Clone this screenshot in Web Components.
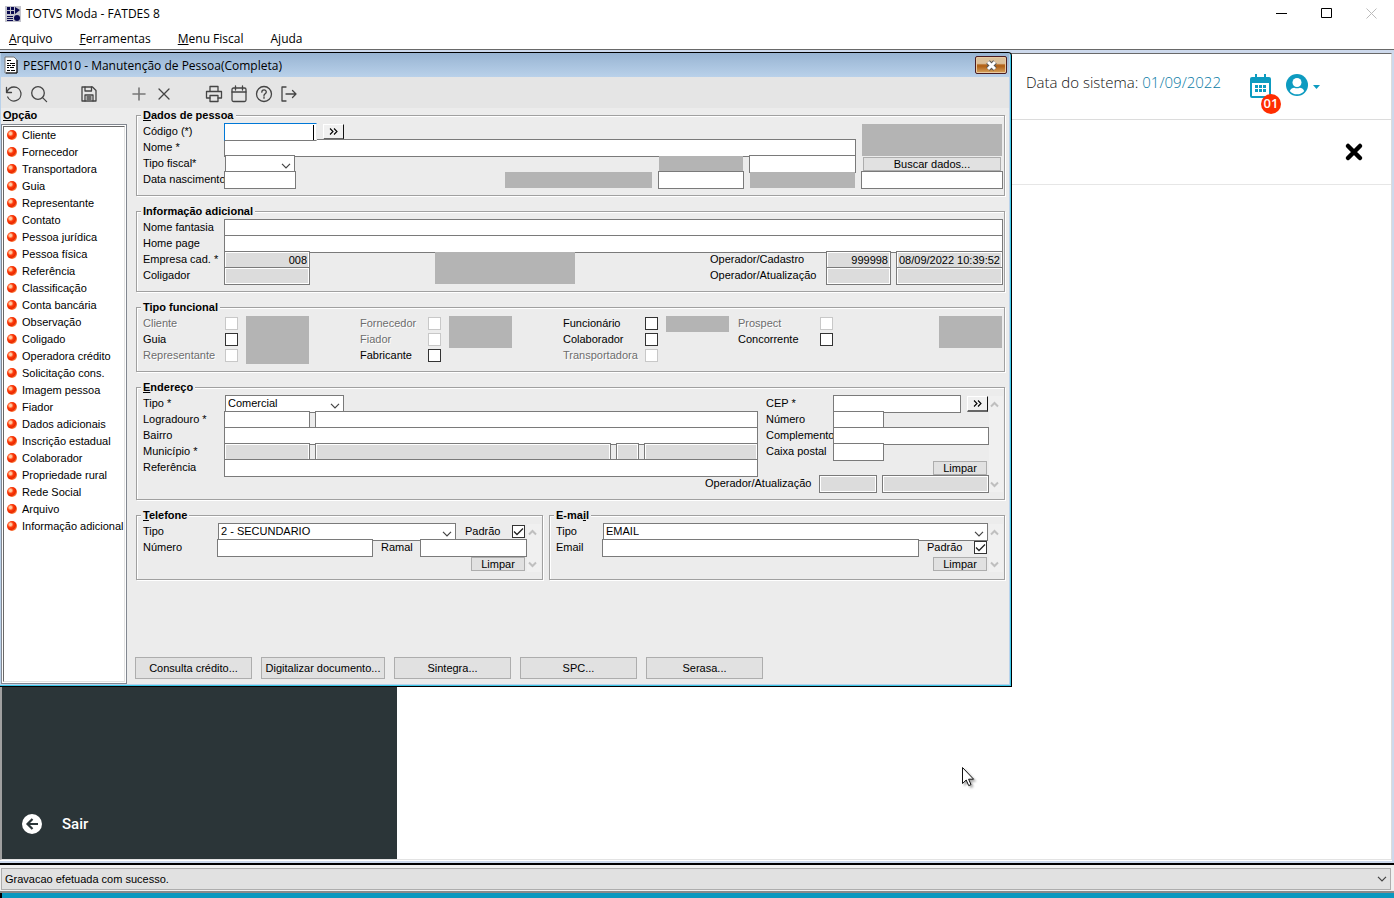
<!DOCTYPE html>
<html lang="pt-BR">
<head>
<meta charset="utf-8">
<title>TOTVS Moda - FATDES 8</title>
<style>
  html, body {
    height: 100%;
    margin: 0;
  }

  body {
    font: 11px/14px "Liberation Sans", Arial, sans-serif;
    color: #000;
    background: #fff;
    overflow: hidden;
  }
</style>
</head>
<body>
<totvs-app></totvs-app>

<script>
const define = (name, html, setup) => {
  customElements.define(name, class extends HTMLElement {
    constructor() {
      super();
      this.attachShadow({ mode: "open" });
    }

    connectedCallback() {
      if (this.shadowRoot.childNodes.length) return;
      this.shadowRoot.innerHTML = typeof html === "function" ? html(this) : html;
      if (setup) setup(this);
    }
  });
};

const chevron = `<svg class="chevron" width="10" height="6" viewBox="0 0 10 6" fill="none" stroke="#444" stroke-width="1.2"><path d="M1 .8 5 4.8 9 .8"/></svg>`;

/* FORM CONTROLS */

define("form-field", (el) => {
  const label = el.getAttribute("label");
  const name = el.getAttribute("name") || "";
  const value = el.getAttribute("value") || "";
  const type = el.getAttribute("type") || "text";
  const width = el.getAttribute("width");
  const disabled = el.hasAttribute("disabled") ? "disabled" : "";
  const size = width ? `width: ${width}px; flex: none;` : "flex: 1;";
  const aria = label ? "" : `aria-label="${name}"`;
  let control = `<input id="control" type="text" value="${value}" ${aria} ${disabled}>`;
  if (type === "select") {
    control = `<select id="control" ${aria}><option>${value}</option></select>${chevron}`;
  }
  if (type === "check") {
    control = `<input id="control" type="checkbox" ${el.hasAttribute("checked") ? "checked" : ""} ${disabled}>
      <svg class="tick" width="13" height="13" viewBox="0 0 13 13" fill="none" stroke="#222" stroke-width="1.3"><path d="M2 6.500 5 9.500 11 3.500"/></svg>`;
  }
  return `
    <style>
      :host {
        display: flex;
        align-items: center;
        height: 16px;
        min-width: 0;
      }

      label {
        flex: none;
        width: var(--label, auto);
        height: 16px;
        line-height: 14px;
        white-space: nowrap;
      }

      .box {
        display: grid;
        align-items: center;
        box-sizing: border-box;
        min-width: 0;
        ${size}
      }

      .box > * { grid-area: 1 / 1; }

      input, select {
        box-sizing: border-box;
        width: 100%;
        min-width: 0;
        height: 18px;
        margin: 0;
        padding: 0 2px;
        border: 1px solid #7a7a7a;
        border-radius: 0;
        outline: none;
        background: #fff;
        color: #000;
        font: inherit;
        appearance: none;
      }

      input:disabled {
        background: #dcdcdc;
        box-shadow: inset 0 0 0 1px #fff;
      }

      .select { padding-left: 1px; }
      select { padding-bottom: 2px; }
      .chevron { justify-self: end; margin: 4px 4px 0 0; pointer-events: none; }

      .check { flex: none; width: 13px; margin-bottom: 2px; }
      .check input { width: 13px; height: 13px; padding: 0; border-color: #333; }
      .check input:disabled { border-color: #c8c8c8; background: #fff; }
      .tick { display: none; pointer-events: none; }
      input:checked + .tick { display: block; }

      :host([type=check][disabled]) label { color: #6d6d6d; text-shadow: 1px 1px 0 #fff; }
      :host([numeric]) input { text-align: right; }

      :host([focused]) .box { position: relative; }
      :host([focused]) input { border-color: #0078d7 #ececec #7a7a7a #0078d7; }
      :host([focused]) .box::after {
        content: "";
        position: absolute;
        top: 2px;
        right: 3px;
        width: 1px;
        height: 15px;
        background: #000;
      }

      slot { display: contents; }
      ::slotted(*) { margin-left: 5px !important; }
      ::slotted(lookup-button) { margin-left: 6px !important; }
      ::slotted(form-field:not([width])) { flex: 1; }
    </style>
    ${label ? `<label for="control">${label}</label>` : ""}
    <div class="box ${type}">${control}</div>
    <slot></slot>`;
});

define("push-button", `
  <style>
    :host { display: block; }

    button {
      display: block;
      box-sizing: border-box;
      width: 100%;
      height: 100%;
      padding: 0 2px;
      border: 1px solid #adadad;
      background: #e1e1e1;
      color: #000;
      font: inherit;
      line-height: 12px;
      white-space: nowrap;
    }
  </style>
  <button type="button"><slot></slot></button>`);

define("lookup-button", `
  <style>
    :host { display: block; flex: none; }

    button {
      display: grid;
      place-items: center;
      box-sizing: border-box;
      width: 21px;
      height: 16px;
      padding: 0;
      border: solid;
      border-width: 1px 1px 2px 1px;
      border-color: #fff #111 #666 #fff;
      background: #f0f0f0;
    }
  </style>
  <button type="button" aria-label="Pesquisar">
    <svg width="9" height="7" viewBox="0 0 9 7" fill="none" stroke="#000" stroke-width="1.1"><path d="M1 .5 4 3.5 1 6.5M5 .5 8 3.5 5 6.5"/></svg>
  </button>`);

define("mask-block", `
  <style>
    :host {
      display: block;
      background: #b4b4b4;
    }
  </style>`);

define("record-scroll", `
  <style>
    :host {
      display: flex;
      flex-direction: column;
      justify-content: space-between;
      align-items: center;
      box-sizing: border-box;
      padding: 5px 3px 4px 0;
      background: #f0f0f0;
    }

    button { display: block; padding: 0; border: 0; background: none; }
    svg { display: block; }
  </style>
  <button type="button" aria-label="Anterior"><svg width="9" height="7" viewBox="0 0 9 7" fill="none" stroke="#bfbfbf" stroke-width="2"><path d="M1 5.5 4.5 2 8 5.5"/></svg></button>
  <button type="button" aria-label="Próximo"><svg width="9" height="7" viewBox="0 0 9 7" fill="none" stroke="#bfbfbf" stroke-width="2"><path d="M1 1.5 4.5 5 8 1.5"/></svg></button>`);

define("group-box", `
  <style>
    :host {
      display: block;
      min-width: 0;
      --label: 81px;
    }

    fieldset {
      position: relative;
      min-width: 0;
      margin: 0;
      padding: 8px 1px 7px 6px;
      border: 1px solid #a0a0a0;
      box-shadow: 1px 1px 0 #fff, inset 1px 1px 0 #fff;
    }

    /* sits over the top border */
    legend {
      position: absolute;
      top: -8px;
      left: 4px;
      padding: 0 2px;
      background: #ececec;
      font-weight: bold;
      white-space: nowrap;
    }

    .grid {
      display: grid;
      grid-template-columns: var(--columns);
      grid-auto-rows: 16px;
      column-gap: var(--gap, 5px);
    }
  </style>
  <fieldset>
    <legend><slot name="legend"></slot></legend>
    <div class="grid"><slot></slot></div>
  </fieldset>`);

/* FORM */

define("person-form", `
  <style>
    :host {
      display: flex;
      flex-direction: column;
      gap: 15px;
      min-width: 0;
      padding: 7px 4px 5px 0;
    }

    .dados { --columns: 76px 1fr 148px 86px 107px 142px; }
    .info { --columns: 287px 140px 1fr 181px 107px; }
    .tipo { --columns: 95px 63px 35px 81px 63px 35px 95px 64px 95px 1fr 64px; --gap: 8px; --label: 82px; }
    .narrow { --label: 68px; }
    .inset { margin: 0 1px; }
    .short { margin-right: 1px; }
    .endereco { --columns: 1fr 8px 223px 14px; --gap: 0px; }
    .cep { --label: 67px; }
    .operador { --label: 114px; justify-self: end; }
    .cadastro { --label: 116px; }
    .nolabel { --label: auto; }

    .pair {
      display: grid;
      grid-template-columns: 407px 1fr;
      gap: 6px;
    }

    .telefone { --columns: 1fr 14px; --gap: 0px; --label: 74px; }
    .email { --columns: 1fr 14px; --gap: 0px; --label: 46px; }

    .line {
      display: flex;
      gap: 8px;
      min-width: 0;
    }

    .line > :first-child { flex: 1; }
    .padrao { --label: 47px; padding-right: 2px; }
    .ramal { --label: 39px; }
    .limpar { width: 54px; height: 14px; margin: 1px 2px 0 0; justify-self: end; }
    .buscar { margin: 1px 2px; height: 14px; }

    .actions {
      display: flex;
      gap: 9px;
      margin: 62px 0 0 -1px;
    }

    .actions push-button { width: 117px; height: 22px; }
    .actions .long { width: 124px; }
  </style>

  <group-box class="dados">
    <span slot="legend"><u>D</u>ados de pessoa</span>
    <form-field label="Código (*)" width="93" focused style="grid-area: 1 / 1 / 2 / 5"><lookup-button></lookup-button></form-field>
    <mask-block class="inset" style="grid-area: 1 / 6 / 3 / 7"></mask-block>
    <form-field label="Nome *" style="grid-area: 2 / 1 / 3 / 6"></form-field>
    <form-field label="Tipo fiscal*" type="select" width="71" style="grid-area: 3 / 1 / 4 / 3"></form-field>
    <mask-block class="inset" style="grid-area: 3 / 4"></mask-block>
    <form-field class="nolabel" name="Documento" style="grid-area: 3 / 5"></form-field>
    <push-button class="buscar" style="grid-area: 3 / 6">Buscar dados...</push-button>
    <form-field label="Data nascimento" width="72" style="grid-area: 4 / 1 / 5 / 3"></form-field>
    <mask-block class="short" style="grid-area: 4 / 3"></mask-block>
    <form-field class="nolabel" name="Registro" style="grid-area: 4 / 4"></form-field>
    <mask-block class="inset" style="grid-area: 4 / 5"></mask-block>
    <form-field class="nolabel" name="Complemento do registro" style="grid-area: 4 / 6"></form-field>
  </group-box>

  <group-box class="info">
    <span slot="legend">Informação adicional</span>
    <form-field label="Nome fantasia" style="grid-area: 1 / 1 / 2 / -1"></form-field>
    <form-field label="Home page" style="grid-area: 2 / 1 / 3 / -1"></form-field>
    <form-field label="Empresa cad. *" value="008" width="86" numeric disabled style="grid-area: 3 / 1"></form-field>
    <mask-block style="grid-area: 3 / 2 / 5 / 3"></mask-block>
    <form-field class="cadastro" label="Operador/Cadastro" value="999998" width="65" numeric disabled style="grid-area: 3 / 4"></form-field>
    <form-field class="nolabel" name="Data do cadastro" value="08/09/2022 10:39:52" disabled style="grid-area: 3 / 5"></form-field>
    <form-field label="Coligador" width="86" disabled style="grid-area: 4 / 1"></form-field>
    <form-field class="cadastro" label="Operador/Atualização" width="65" disabled style="grid-area: 4 / 4"></form-field>
    <form-field class="nolabel" name="Data da atualização" disabled style="grid-area: 4 / 5"></form-field>
  </group-box>

  <group-box class="tipo">
    <span slot="legend">Tipo funcional</span>
    <form-field label="Cliente" type="check" disabled style="grid-area: 1 / 1"></form-field>
    <form-field label="Guia" type="check" style="grid-area: 2 / 1"></form-field>
    <form-field label="Representante" type="check" disabled style="grid-area: 3 / 1"></form-field>
    <mask-block style="grid-area: 1 / 2 / 4 / 3"></mask-block>
    <form-field class="narrow" label="Fornecedor" type="check" disabled style="grid-area: 1 / 4"></form-field>
    <form-field class="narrow" label="Fiador" type="check" disabled style="grid-area: 2 / 4"></form-field>
    <form-field class="narrow" label="Fabricante" type="check" style="grid-area: 3 / 4"></form-field>
    <mask-block style="grid-area: 1 / 5 / 3 / 6"></mask-block>
    <form-field label="Funcionário" type="check" style="grid-area: 1 / 7"></form-field>
    <form-field label="Colaborador" type="check" style="grid-area: 2 / 7"></form-field>
    <form-field label="Transportadora" type="check" disabled style="grid-area: 3 / 7"></form-field>
    <mask-block class="short" style="grid-area: 1 / 8"></mask-block>
    <form-field label="Prospect" type="check" disabled style="grid-area: 1 / 9"></form-field>
    <form-field label="Concorrente" type="check" style="grid-area: 2 / 9"></form-field>
    <mask-block class="short" style="grid-area: 1 / 11 / 3 / 12"></mask-block>
  </group-box>

  <group-box class="endereco">
    <span slot="legend"><u>E</u>ndereço</span>
    <form-field label="Tipo *" type="select" value="Comercial" width="120" style="grid-area: 1 / 1"></form-field>
    <form-field label="Logradouro *" width="86" style="grid-area: 2 / 1"><form-field class="nolabel" name="Nome do logradouro"></form-field></form-field>
    <form-field label="Bairro" style="grid-area: 3 / 1"></form-field>
    <form-field label="Município *" width="86" disabled style="grid-area: 4 / 1">
      <form-field class="nolabel" name="Nome do município" disabled></form-field>
      <form-field class="nolabel" name="UF" width="23" disabled></form-field>
      <form-field class="nolabel" name="País" width="114" disabled></form-field>
    </form-field>
    <form-field label="Referência" style="grid-area: 5 / 1"></form-field>
    <form-field class="cep" label="CEP *" width="128" style="grid-area: 1 / 3"><lookup-button></lookup-button></form-field>
    <form-field class="cep" label="Número" width="51" style="grid-area: 2 / 3"></form-field>
    <form-field class="cep" label="Complemento" style="grid-area: 3 / 3"></form-field>
    <form-field class="cep" label="Caixa postal" width="51" style="grid-area: 4 / 3"></form-field>
    <push-button class="limpar" style="grid-area: 5 / 3">Limpar</push-button>
    <form-field class="operador" label="Operador/Atualização" width="58" disabled style="grid-area: 6 / 1 / 7 / 4"><form-field class="nolabel" name="Data da atualização" width="107" disabled></form-field></form-field>
    <record-scroll style="grid-area: 1 / 4 / 7 / 5"></record-scroll>
  </group-box>

  <div class="pair">
    <group-box class="telefone">
      <span slot="legend"><u>T</u>elefone</span>
      <div class="line" style="grid-area: 1 / 1">
        <form-field class="short" label="Tipo" type="select" value="2 - SECUNDARIO"></form-field>
        <form-field class="padrao" label="Padrão" type="check" checked></form-field>
      </div>
      <div class="line" style="grid-area: 2 / 1">
        <form-field label="Número"></form-field>
        <form-field class="ramal" label="Ramal" width="107"></form-field>
      </div>
      <push-button class="limpar" style="grid-area: 3 / 1">Limpar</push-button>
      <record-scroll style="grid-area: 1 / 2 / 4 / 3"></record-scroll>
    </group-box>
    <group-box class="email">
      <span slot="legend">E-ma<u>i</u>l</span>
      <form-field class="short" label="Tipo" type="select" value="EMAIL" style="grid-area: 1 / 1"></form-field>
      <div class="line" style="grid-area: 2 / 1">
        <form-field label="Email"></form-field>
        <form-field class="padrao" label="Padrão" type="check" checked></form-field>
      </div>
      <push-button class="limpar" style="grid-area: 3 / 1">Limpar</push-button>
      <record-scroll style="grid-area: 1 / 2 / 4 / 3"></record-scroll>
    </group-box>
  </div>

  <div class="actions">
    <push-button>Consulta crédito...</push-button>
    <push-button class="long">Digitalizar documento...</push-button>
    <push-button>Sintegra...</push-button>
    <push-button>SPC...</push-button>
    <push-button>Serasa...</push-button>
  </div>`);

/* OPTION LIST */

const options = [
  "Cliente", "Fornecedor", "Transportadora", "Guia", "Representante", "Contato",
  "Pessoa jurídica", "Pessoa física", "Referência", "Classificação", "Conta bancária",
  "Observação", "Coligado", "Operadora crédito", "Solicitação cons.", "Imagem pessoa",
  "Fiador", "Dados adicionais", "Inscrição estadual", "Colaborador", "Propriedade rural",
  "Rede Social", "Arquivo", "Informação adicional",
];

define("option-list", () => `
  <style>
    :host {
      display: flex;
      flex-direction: column;
      min-width: 0;
    }

    h2 { margin: 0; padding: 0 2px 2px; font: bold 11px/14px "Liberation Sans", Arial, sans-serif; }

    .frame {
      flex: 1;
      padding: 1px;
      border: 1px solid #828790;
      background: #fff;
    }

    ul {
      box-sizing: border-box;
      height: 100%;
      margin: 0;
      padding: 0;
      border: 1px solid;
      border-color: #696969 #e3e3e3 #e3e3e3 #696969;
      list-style: none;
    }

    a {
      display: flex;
      align-items: center;
      gap: 5px;
      height: 15px;
      padding: 0 0 2px 3px;
      color: #000;
      text-decoration: none;
      white-space: nowrap;
    }

    i {
      flex: none;
      width: 10px;
      height: 10px;
      border-radius: 50%;
      background: radial-gradient(circle at 35% 35%, #ffc9a0 0 12%, #ff3c0a 32%, #e82800 55%, #ff8a4a 75%);
    }
  </style>
  <h2><u>O</u>pção</h2>
  <div class="frame">
    <ul>${options.map((o) => `<li><a href="#"><i></i>${o}</a></li>`).join("")}</ul>
  </div>`);

/* TOOLBAR */

const tools = [
  ["Desfazer", `<path d="M1.500 2.500v5h5"/><path d="M1.700 7.300C3 4 5.500 2 9 2a7 7 0 1 1-6.300 10"/>`],
  ["Pesquisar", `<circle cx="8" cy="8" r="6.300"/><path d="m12.600 12.600 4 4"/>`],
  null,
  ["Salvar", `<path d="M2 2h10.500L16 5.500V16H2z"/><path d="M5 2v4h6.500V2M5 16v-6h8v6M7 12h4M7 14h4"/>`],
  null,
  ["Novo", `<path d="M9 3v12M3 9h12" stroke="#777" stroke-width="1.600"/>`],
  ["Excluir", `<path d="m4 4 10 10M14 4 4 14"/>`],
  null,
  ["Imprimir", `<path d="M5 6V1.500h8V6M5 13H1.500V6.500h15V13H13"/><path d="M5 10.500h8v6H5z"/>`],
  ["Calendário", `<rect x="2" y="3" width="14" height="13.500" rx="1.500"/><path d="M2 7h14M5.500 1v4M12.500 1v4"/>`],
  ["Ajuda", `<circle cx="9" cy="9" r="7.500"/><path d="M6.800 7.200C6.800 4.200 11.300 4.300 11.300 7c0 1.700-2.300 1.800-2.300 3.500M9 12v1.300"/>`],
  ["Sair", `<path d="M6 2H2v14h4M6 9h10M12.500 5.500 16 9 12.500 12.500"/>`],
];

define("tool-bar", () => `
  <style>
    :host {
      display: flex;
      align-items: center;
      box-sizing: border-box;
      height: 31px;
      padding-top: 2px;
      background: #e5e5e5;
    }

    button, span {
      display: grid;
      place-items: center;
      width: 25px;
      height: 25px;
      padding: 0;
      border: 0;
      background: none;
    }
  </style>
  ${tools.map((t) => t
    ? `<button type="button" aria-label="${t[0]}"><svg width="18" height="18" viewBox="0 0 18 18" fill="none" stroke="#444" stroke-width="1.300" stroke-linecap="round" stroke-linejoin="round">${t[1]}</svg></button>`
    : "<span></span>").join("")}`);

/* FLOATING WINDOW */

define("mdi-window", `
  <style>
    :host {
      display: block;
      box-sizing: border-box;
      border: solid #000;
      border-width: 1px 1px 1px 0;
      border-radius: 0 4px 0 0;
      background: #ececec;
      box-shadow: inset -1px -1px 0 #3cc8e8, inset -2px -2px 0 #b9d1ea, inset 1px 0 0 #b9d1ea;
      padding: 0 2px 2px 1px;
    }

    header {
      display: flex;
      align-items: center;
      height: 24px;
      padding: 0 2px 0 3px;
      background: linear-gradient(#98b4d2, #b9d1ea);
      font: 12px/18px "Open Sans", "Segoe UI", sans-serif;
    }

    h1 { flex: 1; margin: 0 0 0 5px; padding-top: 1px; font: inherit; }

    header button {
      display: grid;
      place-items: center;
      width: 32px;
      height: 18px;
      padding: 0;
      border: 1px solid #4a1c22;
      border-radius: 2px;
      background: linear-gradient(#dcc09a 0 40%, #b3641a 50% 60%, #d7a560);
      box-shadow: inset 0 0 0 1px #e8c9a0;
    }

    .body {
      display: grid;
      grid-template-columns: 126px 1fr;
      column-gap: 9px;
    }
  </style>
  <header>
    <svg width="14" height="18" viewBox="0 0 14 18"><path d="M1 1h9l3 3v13H1z" fill="#fff" stroke="#777"/><path d="M13 4v13H2" fill="none" stroke="#000"/><path d="M3 4.500h4M3 7.500h2M6 7.500h5M3 9.500h4M8 9.500h3M3 11.500h2M6 11.500h4M3 14.500h3M7 14.500h4" stroke="#000" stroke-width="1.200"/></svg>
    <h1>PESFM010 - Manutenção de Pessoa(Completa)</h1>
    <button type="button" aria-label="Fechar"><svg width="13" height="11" viewBox="0 0 13 11"><path d="m3 2 7 7M10 2 3 9" stroke="#555" stroke-width="5"/><path d="m3 2 7 7M10 2 3 9" stroke="#fff" stroke-width="3"/></svg></button>
  </header>
  <tool-bar></tool-bar>
  <div class="body">
    <option-list></option-list>
    <person-form></person-form>
  </div>`);

/* WEB PAGE BEHIND THE WINDOW */

define("home-page", `
  <style>
    :host {
      display: grid;
      grid-template-columns: 395px 1fr;
      box-sizing: border-box;
      background: #fff;
    }

    aside {
      display: flex;
      flex-direction: column;
      justify-content: flex-end;
      padding: 0 20px 24px;
      background: #2b3538;
    }

    aside a {
      display: flex;
      align-items: center;
      gap: 20px;
      color: #fff;
      font: 500 15px/22px Roboto, sans-serif;
      text-decoration: none;
    }

    .top {
      display: flex;
      justify-content: flex-end;
      height: 65px;
      border-bottom: 1px solid #dcdcdc;
      font: 300 15px/20px "Open Sans", sans-serif;
    }

    .top p { margin: 18px 29px 0 0; color: #111; }
    .top b { color: #0a7ba5; font-weight: inherit; }

    button { padding: 0; border: 0; background: none; }
    svg { display: block; }

    .date { position: relative; align-self: flex-start; margin: 20px 15px 0 0; }

    .badge {
      position: absolute;
      left: 11px;
      top: 20px;
      width: 20px;
      height: 20px;
      border-radius: 50%;
      background: #ff2d00;
      color: #fff;
      font: 600 13px/19px "Open Sans", sans-serif;
      text-align: center;
    }

    .user { display: flex; align-items: center; gap: 5px; align-self: flex-start; margin: 20px 71px 0 0; }
    .user .caret { margin-top: 4px; }

    .sub {
      display: flex;
      align-items: center;
      justify-content: flex-end;
      height: 64px;
      padding-right: 27px;
      border-bottom: 1px solid #e6e6e6;
    }
  </style>
  <aside>
    <a href="#"><svg width="20" height="20" viewBox="0 0 20 20"><circle cx="10" cy="10" r="10" fill="#fff"/><path d="M10.500 5 5.500 10l5 5M5.500 10H16" fill="none" stroke="#2b3538" stroke-width="2.200"/></svg>Sair</a>
  </aside>
  <main>
    <div class="top">
      <p>Data do sistema: <b>01/09/2022</b></p>
      <button class="date" type="button">
        <svg width="21" height="24" viewBox="0 0 21 24"><path d="M2 3h17a2 2 0 0 1 2 2v17a2 2 0 0 1-2 2H2a2 2 0 0 1-2-2V5a2 2 0 0 1 2-2zm0 6v13h17V9z" fill="#0d9bc0" fill-rule="evenodd"/><path d="M5 0h2v4H5zM14 0h2v4h-2zM5 11h3v3H5zM9 11h3v3H9zM13 11h3v3h-3zM5 15h3v3H5zM9 15h3v3H9zM13 15h3v3h-3z" fill="#0d9bc0"/></svg>
        <span class="badge">01</span>
      </button>
      <button class="user" type="button" aria-label="Usuário">
        <svg width="22" height="22" viewBox="0 0 22 22"><circle cx="11" cy="11" r="11" fill="#0d9bc0"/><circle cx="11" cy="8.500" r="4.500" fill="#fff"/><path d="M3.800 17c1-2.400 2.700-3.300 4.400-3.300 1.900.8 3.700.8 5.600 0 1.700 0 3.400.9 4.400 3.300a9.400 9.400 0 0 1-14.400 0z" fill="#fff"/></svg>
        <svg class="caret" width="7" height="4" viewBox="0 0 7 4"><path d="M0 0h7L3.500 4z" fill="#0d9bc0"/></svg>
      </button>
    </div>
    <div class="sub">
      <button type="button" aria-label="Fechar"><svg width="20" height="20" viewBox="0 0 20 20"><path d="m4 4 12 12M16 4 4 16" stroke="#000" stroke-width="4.500" stroke-linecap="round"/></svg></button>
    </div>
  </main>`);

/* APPLICATION */

define("totvs-app", `
  <style>
    :host {
      display: flex;
      flex-direction: column;
      height: 100vh;
    }

    .title {
      display: flex;
      align-items: center;
      height: 27px;
      padding-left: 5px;
      font: 12px/16px "Open Sans", "Segoe UI", sans-serif;
    }

    .title h1 { flex: 1; margin: 0 0 0 5px; font: inherit; }

    .title button {
      display: grid;
      place-items: center;
      width: 45px;
      height: 26px;
      padding: 0;
      border: 0;
      background: none;
    }

    nav {
      display: flex;
      gap: 27px;
      height: 22px;
      padding-left: 9px;
      font: 12px/24px "Open Sans", "Segoe UI", sans-serif;
    }

    nav a { color: #000; text-decoration: none; }

    .mdi {
      position: relative;
      display: flex;
      flex: 1;
      min-height: 0;
      padding: 3px 2px 2px 0;
      border-top: 1px solid #696969;
      background: #cdd9ec;
    }

    home-page {
      flex: 1;
      border: solid;
      border-width: 1px 1px 1px 2px;
      border-color: #696969 #dcdcdc #e3e3e3 #a0a0a0;
      box-shadow: 0 1px 0 #fff;
      margin-bottom: 1px;
    }

    /* floats over the page */
    mdi-window {
      position: absolute;
      top: 2px;
      left: 0;
      right: 382px;
    }

    .cursor { position: absolute; left: 962px; top: 717px; filter: drop-shadow(2px 2px 1px #0005); }

    .status {
      display: grid;
      align-items: center;
      padding: 3px 3px 1px 1px;
      border-top: 2px solid #000;
      border-bottom: 2px solid #8a8a8a;
      background: #f0f0f0;
    }

    .status > * { grid-area: 1 / 1; }
    .status svg { justify-self: end; margin-right: 4px; pointer-events: none; }

    select {
      box-sizing: border-box;
      width: 100%;
      height: 22px;
      padding: 0 3px;
      border: 1px solid #adadad;
      border-radius: 0;
      background: #e1e1e1;
      color: #000;
      font: inherit;
      appearance: none;
    }

    .taskbar { height: 5px; border-left: 2px solid #000; background: #0a98bf; }
  </style>
  <div class="title">
    <svg width="16" height="16" viewBox="0 0 16 16"><path fill="#c4c4cc" d="M0 0h16v16H0z"/><path fill="#0a0a50" d="M2 1h3v3H2zM6 1h3v3H6zM2 5h3v3H2zM6 5h3v3H6zM10 1l5 3-5 4zM2 10h6v1H2zM2 12h6v1H2zM2 14h6v1H2z"/><circle cx="12" cy="12" r="3" fill="#0a0a50"/></svg>
    <h1>TOTVS Moda - FATDES 8</h1>
    <button type="button" aria-label="Minimizar"><svg width="11" height="11" viewBox="0 0 11 11"><path d="M0 5.500h11" stroke="#000"/></svg></button>
    <button type="button" aria-label="Maximizar"><svg width="11" height="11" viewBox="0 0 11 11"><path d="M.5.5h10v9H.5z" fill="none" stroke="#000"/></svg></button>
    <button type="button" aria-label="Fechar"><svg width="11" height="11" viewBox="0 0 11 11"><path d="m.5.5 10 10M10.500.5l-10 10" stroke="#bbb"/></svg></button>
  </div>
  <nav>
    <a href="#"><u>A</u>rquivo</a>
    <a href="#"><u>F</u>erramentas</a>
    <a href="#"><u>M</u>enu Fiscal</a>
    <a href="#">A<u>j</u>uda</a>
  </nav>
  <div class="mdi">
    <home-page></home-page>
    <mdi-window></mdi-window>
    <svg class="cursor" width="13" height="20" viewBox="0 0 13 20"><path d="M.5.5v16l3.700-3.500 2.500 5.600 2.300-1-2.400-5.400h5z" fill="#fff" stroke="#111"/></svg>
  </div>
  <div class="status">
    <select aria-label="Mensagens"><option>Gravacao efetuada com sucesso.</option></select>
    ${chevron}
  </div>
  <div class="taskbar"></div>`);
</script>
</body>
</html>
